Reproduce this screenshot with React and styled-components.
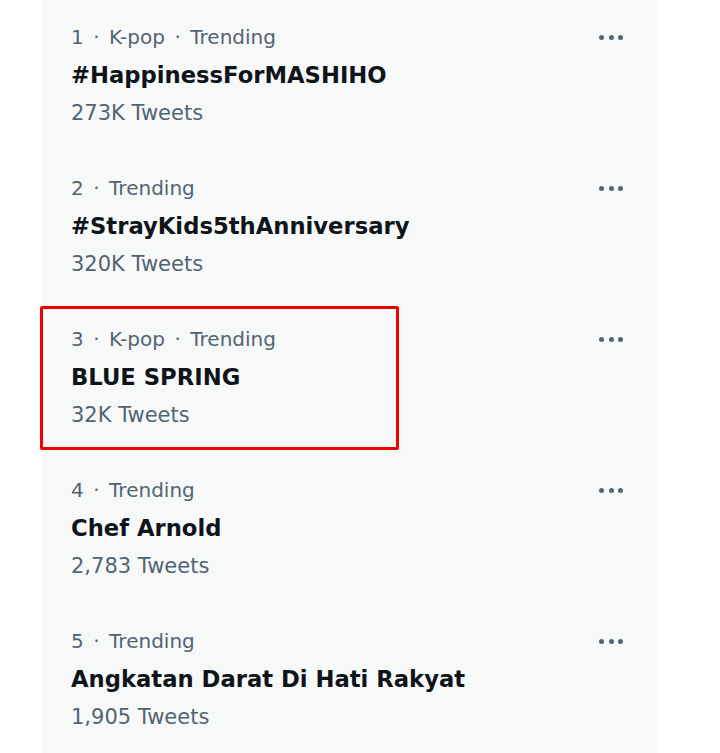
import styled, { createGlobalStyle } from "styled-components";

const GlobalStyle = createGlobalStyle`
  html, body {
    margin: 0;
    padding: 0;
    background: #ffffff;
  }
  body {
    font-family: "DejaVu Sans", "Liberation Sans", sans-serif;
  }
`;

const Page = styled.div`
  width: 720px;
  height: 753px;
  overflow: hidden;
  background: #ffffff;
`;

const Panel = styled.section`
  margin-left: 42px;
  width: 616px;
  min-height: 753px;
  background: #f7f9f9;
`;

const Item = styled.div`
  position: relative;
  display: flex;
  justify-content: space-between;
  align-items: flex-start;
  height: 151px;
  box-sizing: border-box;
  padding: 18px 35px 0 29px;
`;

const Body = styled.div`
  display: flex;
  flex-direction: column;
`;

const Meta = styled.div`
  font-size: 20px;
  line-height: 38px;
  color: #536471;
`;

const Separator = styled.span`
  margin: 0 9.5px;
`;

const Title = styled.div`
  font-size: 22.7px;
  line-height: 38px;
  font-weight: 700;
  color: #0f1419;
`;

const Count = styled.div`
  font-size: 21px;
  line-height: 38px;
  color: #536471;
`;

const MoreButton = styled.button`
  display: flex;
  gap: 4.5px;
  align-items: center;
  height: 38px;
  padding: 0;
  border: none;
  background: transparent;
  cursor: pointer;
`;

const Dot = styled.span`
  width: 5px;
  height: 5px;
  border-radius: 50%;
  background: #536471;
`;

const Highlight = styled.div`
  position: absolute;
  left: -2px;
  top: 4px;
  width: 359px;
  height: 144px;
  box-sizing: border-box;
  border: 3px solid #ee0000;
  border-radius: 2px;
  pointer-events: none;
`;

const trends = [
  { meta: ["1", "K-pop", "Trending"], title: "#HappinessForMASHIHO", count: "273K Tweets" },
  { meta: ["2", "Trending"], title: "#StrayKids5thAnniversary", count: "320K Tweets" },
  { meta: ["3", "K-pop", "Trending"], title: "BLUE SPRING", count: "32K Tweets", marked: true },
  { meta: ["4", "Trending"], title: "Chef Arnold", count: "2,783 Tweets" },
  { meta: ["5", "Trending"], title: "Angkatan Darat Di Hati Rakyat", count: "1,905 Tweets" },
];

export default function App() {
  return (
    <Page>
      <GlobalStyle />
      <Panel>
        {trends.map((t) => (
          <Item key={t.title}>
            {t.marked && <Highlight />}
            <Body>
              <Meta>
                {t.meta.map((part, i) => (
                  <span key={part}>
                    {i > 0 && <Separator>·</Separator>}
                    {part}
                  </span>
                ))}
              </Meta>
              <Title>{t.title}</Title>
              <Count>{t.count}</Count>
            </Body>
            <MoreButton aria-label="More">
              <Dot />
              <Dot />
              <Dot />
            </MoreButton>
          </Item>
        ))}
      </Panel>
    </Page>
  );
}
